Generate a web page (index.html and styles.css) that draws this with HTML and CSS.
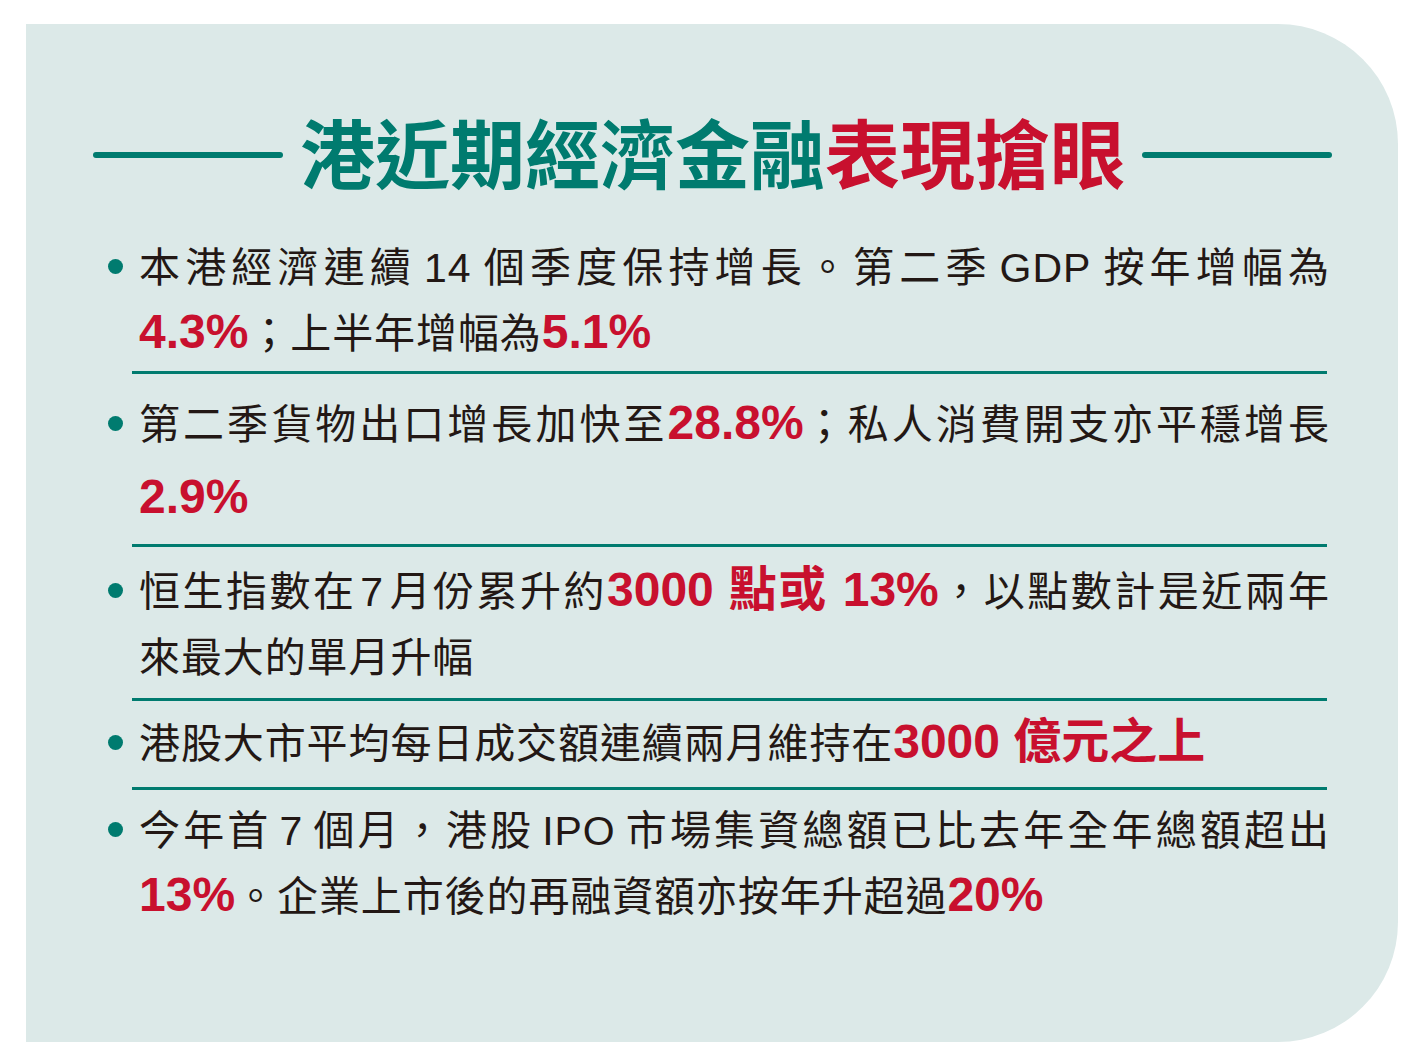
FILE: index.html
```html
<!DOCTYPE html>
<html lang="zh-Hant">
<head>
<meta charset="utf-8">
<title>港近期經濟金融表現搶眼</title>
<link rel="stylesheet" href="styles.css">
</head>
<body>
<div class="card">
  <h1 class="title">
    <span class="title-rule"></span>
    <span class="title-text"><span class="t-teal">港近期經濟金融</span><span class="t-red">表現搶眼</span></span>
    <span class="title-rule"></span>
  </h1>
  <div class="list">
    <div class="item item-gdp">
      <span class="dot"></span>
      <div class="body">
        <p class="line full">本港經濟連續<span class="latin">14</span>個季度保持增長。第二季<span class="latin">GDP</span>按年增幅為</p>
        <p class="line"><b class="hl">4.3%</b>；上半年增幅為<b class="hl">5.1%</b></p>
      </div>
    </div>
    <hr class="sep">
    <div class="item item-export">
      <span class="dot"></span>
      <div class="body">
        <p class="line full">第二季貨物出口增長加快至<b class="hl">28.8%</b>；私人消費開支亦平穩增長</p>
        <p class="line line-figure"><b class="hl">2.9%</b></p>
      </div>
    </div>
    <hr class="sep">
    <div class="item item-hsi">
      <span class="dot"></span>
      <div class="body">
        <p class="line full">恒生指數在<span class="latin-sm">7</span>月份累升約<b class="hl">3000 點或 13%</b>，以點數計是近兩年</p>
        <p class="line">來最大的單月升幅</p>
      </div>
    </div>
    <hr class="sep">
    <div class="item item-turnover">
      <span class="dot"></span>
      <div class="body">
        <p class="line">港股大市平均每日成交額連續兩月維持在<b class="hl">3000 億元之上</b></p>
      </div>
    </div>
    <hr class="sep">
    <div class="item item-ipo">
      <span class="dot"></span>
      <div class="body">
        <p class="line full">今年首<span class="latin">7</span>個月，港股<span class="latin">IPO</span>市場集資總額已比去年全年總額超出</p>
        <p class="line"><b class="hl">13%</b>。企業上市後的再融資額亦按年升超過<b class="hl">20%</b></p>
      </div>
    </div>
  </div>
</div>
</body>
</html>
```
FILE: styles.css
```css
* {
  box-sizing: border-box;
}

html,
body {
  margin: 0;
  padding: 0;
  background: #ffffff;
}

body {
  font-family: "Liberation Sans", "Noto Sans CJK TC", sans-serif;
  color: #231815;
}

.card {
  margin: 24px 0 0 26px;
  width: 1372px;
  height: 1018px;
  background: #dce9e8;
  border-radius: 0 120px 120px 0;
  padding: 87px 66px 0 67px;
}

.title {
  display: flex;
  align-items: center;
  gap: 17px;
  margin: 0;
  height: 80px;
}

.title-rule {
  flex: 1;
  height: 6px;
  border-radius: 3px;
  background: #007b6f;
  margin-top: 8px;
}

.title-text {
  font-family: "Noto Sans CJK TC", sans-serif;
  font-weight: 700;
  font-size: 75px;
  line-height: 80px;
  white-space: nowrap;
}

.t-teal {
  color: #007b6f;
}

.t-red {
  color: #c8102e;
}

.list {
  margin: 32px 2px 0 15px;
}

.item {
  display: flex;
  align-items: flex-start;
  gap: 16px;
  padding: 12px 0 10px;
}

.item-gdp {
  padding-bottom: 4px;
}

.item-export {
  padding-top: 18px;
  padding-bottom: 12px;
}

.item-hsi {
  padding-bottom: 7px;
}

.item-turnover {
  padding-top: 10px;
}

.item-ipo {
  padding-top: 8px;
}

.dot {
  flex: none;
  width: 15px;
  height: 15px;
  border-radius: 50%;
  background: #007b6f;
  margin-top: 24px;
}

.body {
  flex: 1;
}

.line {
  margin: 0;
  font-size: 41px;
  line-height: 66px;
  letter-spacing: 0.9px;
}

.latin {
  margin: 0 8px;
}

.latin-sm {
  margin: 0 4px;
}

.line-figure {
  margin-top: 8px;
}

.full {
  text-align: justify;
  text-align-last: justify;
}

.hl {
  font-weight: 700;
  color: #c8102e;
  font-size: 48px;
  line-height: 1;
  letter-spacing: 0;
}

.sep {
  border: 0;
  height: 3px;
  background: #007b6f;
  margin: 0 3px 0 24px;
}
```
